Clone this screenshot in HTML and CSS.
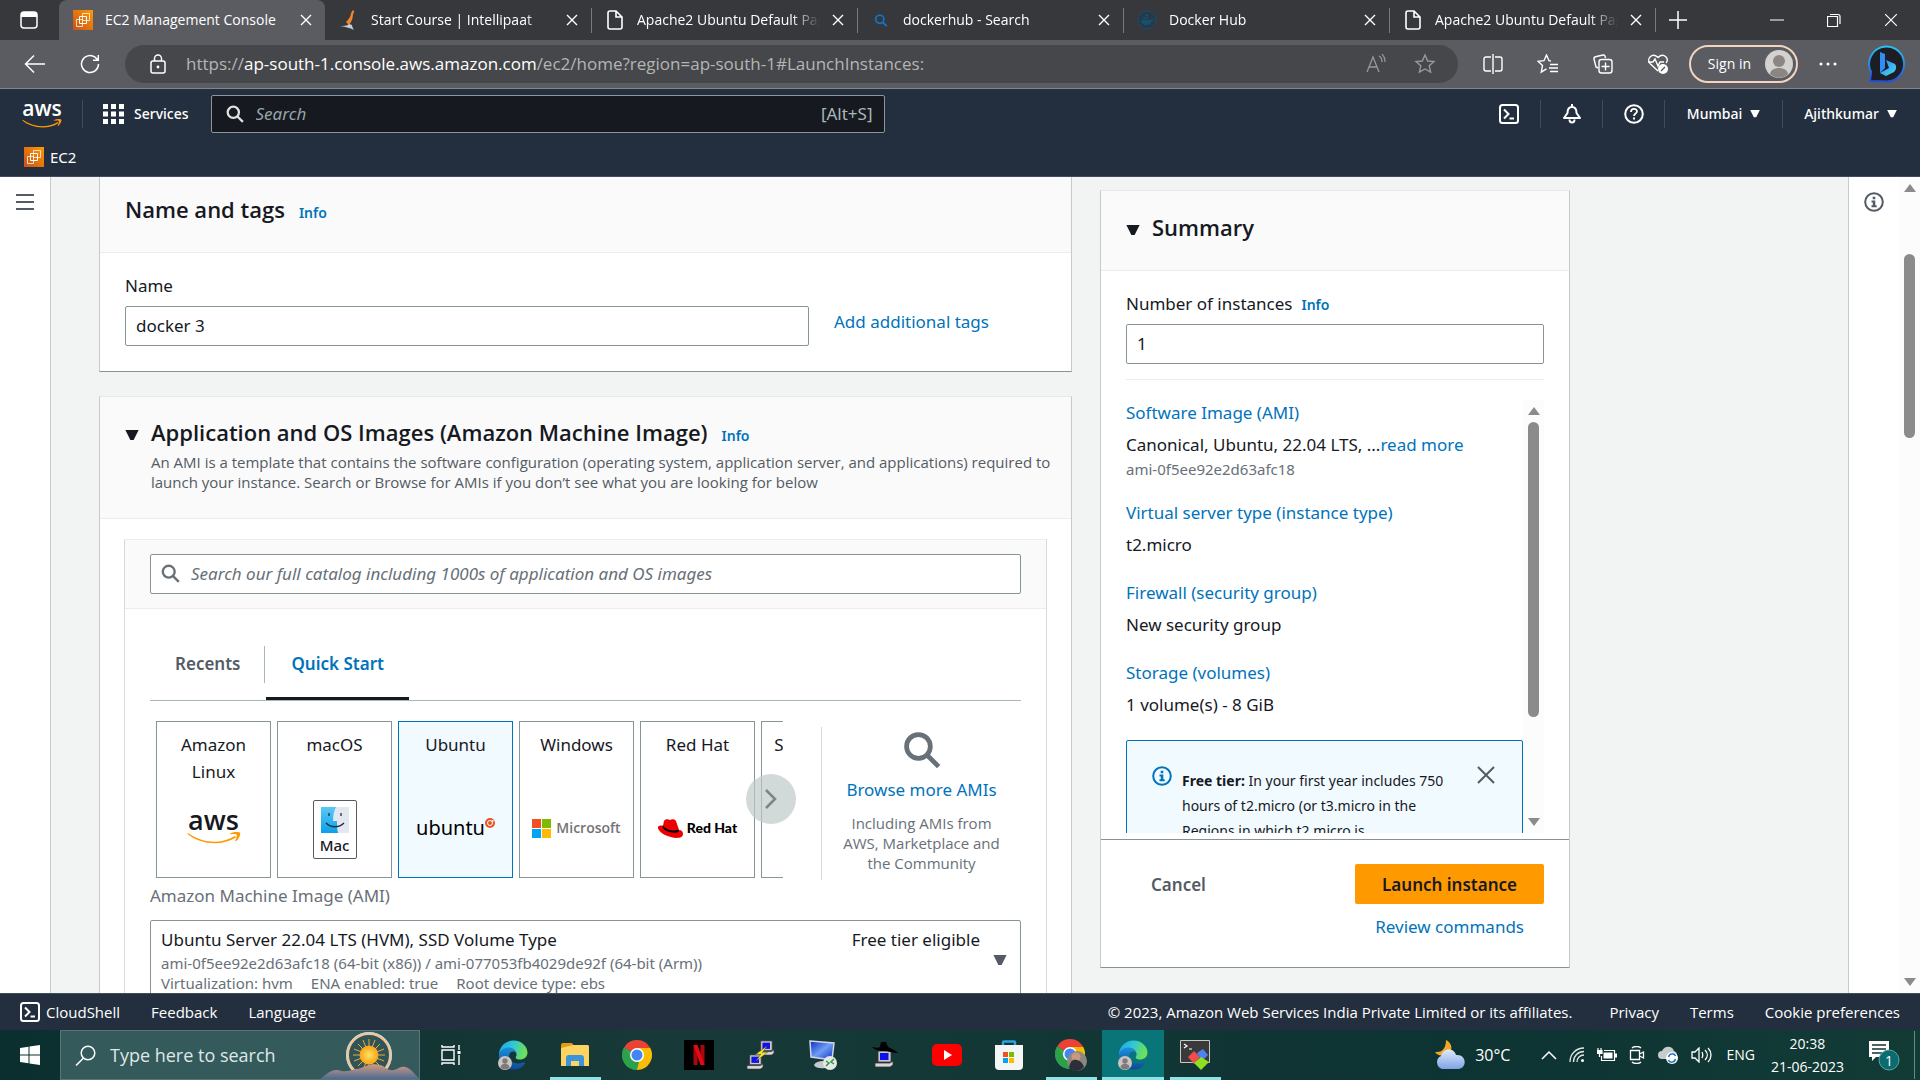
FILE: index.html
```html
<!DOCTYPE html>
<html lang="en">
<head>
<meta charset="utf-8">
<title>EC2 Management Console</title>
<link rel="stylesheet" href="styles.css">
</head>
<body>
<svg class="defs" aria-hidden="true">
  <defs>
    <linearGradient id="ec2g" x1="0" y1="1" x2="1" y2="0"><stop offset="0" stop-color="#c8511b"/><stop offset="1" stop-color="#f90"/></linearGradient>
    <linearGradient id="edgeA" x1="0" y1="0" x2="1" y2="0.3"><stop offset="0" stop-color="#1fa0e6"/><stop offset="0.5" stop-color="#2fc7d8"/><stop offset="1" stop-color="#6be05a"/></linearGradient>
    <linearGradient id="edgeB" x1="0" y1="0" x2="0" y2="1"><stop offset="0" stop-color="#1c8fe0"/><stop offset="1" stop-color="#0c4a93"/></linearGradient>
    <linearGradient id="bingRing" x1="0" y1="0" x2="0" y2="1"><stop offset="0" stop-color="#27c3f3"/><stop offset="1" stop-color="#2450d8"/></linearGradient>
    <linearGradient id="bingB" x1="0" y1="0" x2="1" y2="1"><stop offset="0" stop-color="#3a7bf0"/><stop offset="1" stop-color="#3fe0f0"/></linearGradient>
    <linearGradient id="finder" x1="0" y1="0" x2="0" y2="1"><stop offset="0" stop-color="#5cc8f5"/><stop offset="1" stop-color="#0aa0e8"/></linearGradient>
    <linearGradient id="hill" x1="0" y1="0" x2="0" y2="1"><stop offset="0" stop-color="#d39b83"/><stop offset="1" stop-color="#4c6a92"/></linearGradient>
    <radialGradient id="sun"><stop offset="0" stop-color="#ffe45c"/><stop offset="1" stop-color="#f9a11b"/></radialGradient>
    <linearGradient id="cloudg" x1="0" y1="0" x2="0" y2="1"><stop offset="0" stop-color="#dfeafb"/><stop offset="1" stop-color="#7fa3e6"/></linearGradient>
    <linearGradient id="blueScreen" x1="0" y1="0" x2="1" y2="1"><stop offset="0" stop-color="#0a2cc0"/><stop offset="0.5" stop-color="#6f9df5"/><stop offset="1" stop-color="#0a2cc0"/></linearGradient>
    <symbol id="i-x" viewBox="0 0 12 12"><path d="M1 1l10 10M11 1L1 11" fill="none" stroke="currentColor" stroke-width="1.4"/></symbol>
    <symbol id="i-ec2" viewBox="0 0 20 20"><path fill="url(#ec2g)" d="M0 0h20v20H0z"/><g fill="none" stroke="#fff" stroke-width="1"><path d="M3.500 9.500h6v7h-6zM9.500 3.500h7v7h-7z" opacity=".75"/><path d="M6.500 6.500h7v7h-7z"/></g></symbol>
    <symbol id="i-page" viewBox="0 0 16 20"><path d="M1 3a2 2 0 0 1 2-2h6l6 6v10a2 2 0 0 1-2 2H3a2 2 0 0 1-2-2zM9 1v6h6" fill="none" stroke="#fff" stroke-width="1.600"/></symbol>
    <symbol id="i-search" viewBox="0 0 16 16"><circle cx="6.500" cy="6.500" r="5" fill="none" stroke="currentColor" stroke-width="2"/><path d="M10 10l5 5" stroke="currentColor" stroke-width="2"/></symbol>
    <symbol id="i-shell" viewBox="0 0 20 20"><rect x="1" y="1" width="18" height="18" rx="2.500" fill="none" stroke="#fff" stroke-width="2"/><path d="M5 5.500l4.500 4.500L5 14.500M10.500 14.500H15" fill="none" stroke="#fff" stroke-width="2"/></symbol>
    <symbol id="i-info" viewBox="0 0 20 20"><circle cx="10" cy="10" r="8.800" fill="none" stroke="currentColor" stroke-width="2"/><path d="M8.700 4.800h2.600v2.400H8.700zM7.500 8.500h3.800v4.700h1.400v2H7.500v-2h1.300v-2.700H7.500z" fill="currentColor"/></symbol>
    <symbol id="i-down" viewBox="0 0 12 10"><path d="M0 0h12L7.500 9.200h-3z" fill="currentColor"/></symbol>
    <symbol id="i-edge" viewBox="0 0 30 30"><path d="M1 15C1 6 8 .500 15.500.500 24 .500 29.500 7 29.500 12.500c0 4.500-3.500 7-7.500 7-3.500 0-5-1.500-4-3 1.500-2.500 0-6.500-4.500-6.500C7 10 1 13 1 15z" fill="url(#edgeA)"/><path d="M1 15c.500-5 5-7.500 10-7.500 4 0 7 2.500 7.200 5.500-2-2.500-6.200-2-7 2-1 6 5 10.500 14 7.500 1.500-.400 2 .300 1.500 1.300C24 28 20 29.500 15.500 29.500 7 29.500.500 23 1 15z" fill="url(#edgeB)"/><circle cx="7" cy="23" r="7" fill="#c9c6c4"/><circle cx="7" cy="21" r="2.700" fill="#807b78"/><path d="M2.500 27.500c0-5 9-5 9 0-2.500 2.500-6.500 2.500-9 0z" fill="#807b78"/></symbol>
    <symbol id="i-chrome" viewBox="0 0 30 30"><path d="M15 15L2.010 7.500A15 15 0 0 1 28 7.500z" fill="#ea4335"/><path d="M15 15L28 7.500A15 15 0 0 1 15 30z" fill="#fbbc05"/><path d="M15 15v15A15 15 0 0 1 2.010 7.500z" fill="#34a853"/><path d="M15 8h13.300L21 19 15 30l3-12z" fill="#fbbc05"/><path d="M2.010 7.500L9 19l8 3-2 8A15 15 0 0 1 2.010 7.500z" fill="#2da04a"/><circle cx="15" cy="15" r="7" fill="#fff"/><circle cx="15" cy="15" r="5.500" fill="#4285f4"/></symbol>
    <symbol id="i-pc" viewBox="0 0 20 18"><path d="M4 1h13v11H4z" fill="#c8c8c8" stroke="#333" stroke-width=".8"/><path d="M6 3h8.500v7H6z" fill="#1010e8"/><path d="M1 13h15l3-2v4l-3 2H1z" fill="#d8d8d8" stroke="#333" stroke-width=".8"/></symbol>
    <symbol id="i-swoosh" viewBox="0 0 54 12"><path d="M1 1c14 10 32 12 47 3l1 1.500C34 15 12 12 .500 2z" fill="#f90"/><path d="M43 1.500c4-2 9-2 10-.700s-1 6-4 8.500l-.900-.4c1.500-3 2-5.600 1.400-6.400s-3.500-.600-6.300-.200z" fill="#f90"/></symbol>
  </defs>
</svg>

<header class="browser">
  <div class="tabstrip">
    <button class="icon-btn workspace" aria-label="Tab actions"><svg width="18" height="18" viewBox="0 0 18 18"><rect x="1" y="1" width="16" height="16" rx="3" fill="none" stroke="#fff" stroke-width="1.500"/><path d="M1 4a3 3 0 0 1 3-3h10a3 3 0 0 1 3 3v2H1z" fill="#fff"/></svg></button>
    <div class="tab tab-active"><svg class="fav" width="20" height="20"><use href="#i-ec2"/></svg><span class="tab-title">EC2 Management Console</span><button class="icon-btn" aria-label="Close tab"><svg width="12" height="12"><use href="#i-x"/></svg></button></div>
    <div class="tab no-sep"><svg class="fav" width="20" height="20" viewBox="0 0 20 20"><path d="M14 0c2 1 1 3 0 4 0 4-1 7-4 11L7 12c3-3 5-6 5-9z" fill="#f0862a"/><path d="M1 16c4 0 7 0 9-2l3 1c0 2 1 3 2 5-3-2-8-3-14-4z" fill="#c9cbd8"/></svg><span class="tab-title">Start Course | Intellipaat</span><button class="icon-btn" aria-label="Close tab"><svg width="12" height="12"><use href="#i-x"/></svg></button></div>
    <div class="tab"><svg class="fav" width="20" height="20"><use href="#i-page"/></svg><span class="tab-title">Apache2 Ubuntu Default Page: It works</span><button class="icon-btn" aria-label="Close tab"><svg width="12" height="12"><use href="#i-x"/></svg></button></div>
    <div class="tab"><svg class="fav bing-search" width="20" height="13"><use href="#i-search"/></svg><span class="tab-title">dockerhub - Search</span><button class="icon-btn" aria-label="Close tab"><svg width="12" height="12"><use href="#i-x"/></svg></button></div>
    <div class="tab"><svg class="fav" width="20" height="20" viewBox="0 0 20 20"><circle cx="10" cy="10" r="9" fill="#243a4a" stroke="#1f4a68"/><path d="M4 10h10c1 0 2-1 2-2 1 1 1 2-1 3-1 3-3 4-6 4s-5-2-5-5zM6 7h2v2H6zM9 7h2v2H9zM9 4h2v2H9z" fill="#15506f"/></svg><span class="tab-title">Docker Hub</span><button class="icon-btn" aria-label="Close tab"><svg width="12" height="12"><use href="#i-x"/></svg></button></div>
    <div class="tab"><svg class="fav" width="20" height="20"><use href="#i-page"/></svg><span class="tab-title">Apache2 Ubuntu Default Page: It works</span><button class="icon-btn" aria-label="Close tab"><svg width="12" height="12"><use href="#i-x"/></svg></button></div>
    <button class="icon-btn new-tab" aria-label="New tab"><svg width="18" height="18" viewBox="0 0 18 18"><path d="M9 0v18M0 9h18" stroke="#fff" stroke-width="1.500"/></svg></button>
    <div class="window-buttons">
      <button class="icon-btn" aria-label="Minimize"><svg width="14" height="14" viewBox="0 0 14 14"><path d="M0 7h14" stroke="#fff"/></svg></button>
      <button class="icon-btn" aria-label="Restore"><svg width="14" height="14" viewBox="0 0 14 14"><path d="M.500 3.500h10v10H.500zM3 1.500h8a2 2 0 0 1 2 2V11" fill="none" stroke="#fff" stroke-width="1.200"/></svg></button>
      <button class="icon-btn" aria-label="Close"><svg width="14" height="14" viewBox="0 0 12 12"><path d="M1 1l10 10M11 1L1 11" stroke="#fff"/></svg></button>
    </div>
  </div>
  <div class="toolbar">
    <button class="icon-btn" aria-label="Back"><svg width="22" height="20" viewBox="0 0 22 20"><path d="M21 10H2M10 1.500L1.500 10l8.500 8.500" fill="none" stroke="#fff" stroke-width="1.500"/></svg></button>
    <button class="icon-btn" aria-label="Refresh"><svg width="20" height="20" viewBox="0 0 20 20"><path d="M18.500 10A8.500 8.500 0 1 1 15 3.200L18 6M18.300 1v5.300H13" fill="none" stroke="#fff" stroke-width="1.500"/></svg></button>
    <div class="address">
      <svg width="16" height="20" viewBox="0 0 16 20"><rect x="1" y="7" width="14" height="12" rx="2" fill="none" stroke="#fff" stroke-width="1.500"/><path d="M4.500 7V4.500a3.500 3.500 0 0 1 7 0V7" fill="none" stroke="#fff" stroke-width="1.500"/><circle cx="8" cy="13" r="1.400" fill="#fff"/></svg>
      <a class="url" href="#"><span>https://</span>ap-south-1.console.aws.amazon.com<span>/ec2/home?region=ap-south-1#LaunchInstances:</span></a>
      <svg class="dim" width="20" height="20" viewBox="0 0 20 20"><path d="M1 18L7 3l6 15M3 13h8M13 2c2 1 3 3 3 6M16 0c2 2 3 4 3 8" fill="none" stroke="currentColor" stroke-width="1.300"/></svg>
      <svg class="dim" width="22" height="22" viewBox="0 0 22 22"><path d="M11 2l2.700 6 6.300.600-4.800 4.200 1.400 6.400L11 16l-5.600 3.200 1.400-6.400L2 8.600 8.300 8z" fill="none" stroke="currentColor" stroke-width="1.400"/></svg>
    </div>
    <div class="tool-icons">
      <svg width="20" height="20" viewBox="0 0 20 20"><path d="M8 3H3a2 2 0 0 0-2 2v10a2 2 0 0 0 2 2h5M12 3h5a2 2 0 0 1 2 2v10a2 2 0 0 1-2 2h-5M10 0v20" fill="none" stroke="#fff" stroke-width="1.400"/></svg>
      <svg width="22" height="20" viewBox="0 0 22 20"><path d="M14 7l-2-.300L9.500 1 7 6.700 1 7.300l4.500 4.200L4.300 18l5.200-3.200M13 10.500h8M12 14h9M13 17.500h8" fill="none" stroke="#fff" stroke-width="1.400"/></svg>
      <svg width="20" height="20" viewBox="0 0 20 20"><path d="M5 14l-2-1L1 5a2 2 0 0 1 1.500-2.300L10 1a2 2 0 0 1 2 1l.500 2" fill="none" stroke="#fff" stroke-width="1.400"/><rect x="6" y="5.500" width="13" height="13.500" rx="2.500" fill="none" stroke="#fff" stroke-width="1.400"/><path d="M12.500 8.500v8M8.500 12.500h8" stroke="#fff" stroke-width="1.400"/></svg>
      <svg width="22" height="20" viewBox="0 0 22 20"><path d="M11 17L3 9.500C-1 5 5-2 11 3.500 17-2 23 5 19 9M1 8h5l2-3 3 7 2-4h4" fill="none" stroke="#fff" stroke-width="1.400"/><circle cx="16" cy="15" r="5" fill="#fff"/><path d="M14 17l4-4" stroke="#5b5c61" stroke-width="1.500"/></svg>
    </div>
    <button class="signin">Sign in <svg width="28" height="28" viewBox="0 0 28 28"><circle cx="14" cy="14" r="14" fill="#d4d2cf"/><circle cx="14" cy="11" r="6" fill="#8b8683"/><path d="M5 24c1-8 17-8 18 0-5 5-13 5-18 0z" fill="#8b8683"/></svg></button>
    <button class="icon-btn" aria-label="Settings and more"><svg width="18" height="4" viewBox="0 0 18 4"><g fill="#fff"><circle cx="2" cy="2" r="1.500"/><circle cx="9" cy="2" r="1.500"/><circle cx="16" cy="2" r="1.500"/></g></svg></button>
    <button class="icon-btn bing" aria-label="Bing"><svg width="38" height="38" viewBox="0 0 38 38"><path d="M2 36l1-9A17.500 17.500 0 1 1 19 36.500z" fill="#1d1d26" stroke="url(#bingRing)" stroke-width="2"/><path d="M12 7l5 2v14l-5 5z" fill="#2f8df5"/><path d="M18 15l9 4c2 3 1 6-1 8l-8 4-6-3 9-5z" fill="url(#bingB)"/></svg></button>
  </div>
</header>

<nav class="aws-nav">
  <div class="nav-row">
    <a class="aws-logo" href="#" aria-label="AWS home"><span>aws</span><svg width="40" height="9"><use href="#i-swoosh"/></svg></a>
    <i class="sep"></i>
    <button class="services"><svg width="21" height="20" viewBox="0 0 21 20"><path d="M0 0h5v5H0zM8 0h5v5H8zM16 0h5v5h-5zM0 7.500h5v5H0zM8 7.500h5v5H8zM16 7.500h5v5h-5zM0 15h5v5H0zM8 15h5v5H8zM16 15h5v5h-5z" fill="#fff"/></svg>Services</button>
    <div class="nav-search"><svg width="18" height="18"><use href="#i-search"/></svg><input type="text" placeholder="Search" aria-label="Search AWS"><span>[Alt+S]</span></div>
    <div class="nav-right">
      <button aria-label="CloudShell"><svg width="20" height="20"><use href="#i-shell"/></svg></button>
      <button aria-label="Notifications"><svg width="20" height="20" viewBox="0 0 20 20"><path d="M10 0v3M10 3c4 0 4.500 4 4.500 6L18 14H2l3.500-5C5.500 7 6 3 10 3z" fill="none" stroke="#fff" stroke-width="2" stroke-linejoin="round"/><path d="M7.500 15.500a2.500 3 0 0 0 5 0" fill="none" stroke="#fff" stroke-width="2"/></svg></button>
      <button aria-label="Help"><svg width="20" height="20" viewBox="0 0 20 20"><circle cx="10" cy="10" r="8.800" fill="none" stroke="#fff" stroke-width="2"/><path d="M7 8c0-4 6-4 6-.500 0 2-3 2-3 4.500" fill="none" stroke="#fff" stroke-width="1.800"/><path d="M9 13.500h2v2H9z" fill="#fff"/></svg></button>
      <button class="region">Mumbai <svg width="10" height="8"><use href="#i-down"/></svg></button>
      <button class="account">Ajithkumar <svg width="10" height="8"><use href="#i-down"/></svg></button>
    </div>
  </div>
  <div class="nav-fav"><a href="#"><svg width="20" height="20"><use href="#i-ec2"/></svg>EC2</a></div>
</nav>

<main class="console">
  <aside class="side-left"><button aria-label="Open navigation"><svg width="18" height="16" viewBox="0 0 18 16"><path d="M0 1h18M0 8h18M0 15h18" stroke="#545b64" stroke-width="2"/></svg></button></aside>
  <div class="content">
    <div class="column">
      <section class="card card-name">
        <header class="card-head"><h2>Name and tags</h2><a class="info" href="#">Info</a></header>
        <div class="name-body">
          <label for="iname">Name</label>
          <div class="name-row"><input id="iname" class="field" type="text" value="docker 3"><a href="#">Add additional tags</a></div>
        </div>
      </section>
      <section class="card card-ami">
        <header class="card-head ami-head">
          <svg class="caret" width="14" height="11"><use href="#i-down"/></svg>
          <div><div class="title-line"><h2>Application and OS Images (Amazon Machine Image)</h2><a class="info" href="#">Info</a></div>
          <p>An AMI is a template that contains the software configuration (operating system, application server, and applications) required to launch your instance. Search or Browse for AMIs if you don’t see what you are looking for below</p></div>
        </header>
        <div class="inner">
          <div class="inner-head"><div class="field catalog"><svg width="19" height="19"><use href="#i-search"/></svg><input type="text" aria-label="Search AMIs" placeholder="Search our full catalog including 1000s of application and OS images"></div></div>
          <div class="inner-body">
            <div class="os-tabs"><button>Recents</button><button class="on">Quick Start</button></div>
            <div class="picker">
              <div class="carousel">
                <div class="tiles">
                  <button class="tile">Amazon Linux<span class="logo aws-dark"><span>aws</span><svg width="54" height="12"><use href="#i-swoosh"/></svg></span></button>
                  <button class="tile">macOS<span class="logo mac"><svg width="28" height="26" viewBox="0 0 28 26"><path fill="#e3e8f0" d="M0 0h28v26H0z"/><path d="M0 0h15c-2 4-3 8-3 14h4c0 5 0 8 1 12H0z" fill="url(#finder)"/><path d="M8 6v3M20 6v3M5 16c5 5 13 5 18 0" fill="none" stroke="#1c2b45" stroke-width="1.300"/></svg>Mac</span></button>
                  <button class="tile on">Ubuntu<span class="logo ubuntu">ubuntu<svg width="10" height="10" viewBox="0 0 10 10"><circle cx="5" cy="5" r="5" fill="#e95420"/><circle cx="5" cy="5" r="2.500" fill="none" stroke="#fff"/><circle cx="7.600" cy="3" r="1" fill="#fff"/></svg></span></button>
                  <button class="tile">Windows<span class="logo ms"><svg width="19" height="19" viewBox="0 0 19 19"><path fill="#f25022" d="M0 0h9v9H0z"/><path fill="#7fba00" d="M10 0h9v9h-9z"/><path fill="#00a4ef" d="M0 10h9v9H0z"/><path fill="#ffb900" d="M10 10h9v9h-9z"/></svg>Microsoft</span></button>
                  <button class="tile">Red Hat<span class="logo redhat"><svg width="25" height="19" viewBox="0 0 25 19"><path d="M6 2c1-2 4-2 6-1 2-1 5-1 6 1l3 9c3 0 4 2 4 4 0 6-12 4-18 1S-2 8 1 7c1-.500 3-.500 4-.300z" fill="#e00"/><path d="M5 6.500C8 11 16 13 20.500 10.500l.5 2C16 15.500 7 12.500 4.500 8.500z" fill="#000"/></svg>Red Hat</span></button>
                  <button class="tile">SUSE Linux</button>
                </div>
                <button class="next" aria-label="Next"><svg width="12" height="20" viewBox="0 0 12 20"><path d="M1 1l9 9-9 9" fill="none" stroke="#7d8585" stroke-width="2.500"/></svg></button>
              </div>
              <div class="browse"><svg width="38" height="38"><use href="#i-search"/></svg><a href="#">Browse more AMIs</a><p>Including AMIs from AWS, Marketplace and the Community</p></div>
            </div>
            <span class="ami-label" id="amil">Amazon Machine Image (AMI)</span>
            <button class="ami-select" aria-haspopup="listbox" aria-labelledby="amil">
              <span class="ami-text"><span class="ami-name"><span>Ubuntu Server 22.04 LTS (HVM), SSD Volume Type</span><span>Free tier eligible</span></span>
              <small>ami-0f5ee92e2d63afc18 (64-bit (x86)) / ami-077053fb4029de92f (64-bit (Arm))</small>
              <small class="facts"><span>Virtualization: hvm</span><span>ENA enabled: true</span><span>Root device type: ebs</span></small></span>
              <svg width="14" height="11"><use href="#i-down"/></svg>
            </button>
          </div>
        </div>
      </section>
    </div>
    <section class="card summary">
      <header class="card-head sum-head"><svg class="caret" width="14" height="11"><use href="#i-down"/></svg><h2>Summary</h2></header>
      <div class="sum-body">
        <div class="count-label"><label for="count">Number of instances</label><a class="info" href="#">Info</a></div>
        <input id="count" class="field" type="text" inputmode="numeric" value="1">
        <hr>
        <div class="sum-scroll">
          <div class="sum-list">
            <dl>
              <dt><a href="#">Software Image (AMI)</a></dt><dd>Canonical, Ubuntu, 22.04 LTS, ...<a href="#">read more</a><small>ami-0f5ee92e2d63afc18</small></dd>
              <dt><a href="#">Virtual server type (instance type)</a></dt><dd>t2.micro</dd>
              <dt><a href="#">Firewall (security group)</a></dt><dd>New security group</dd>
              <dt><a href="#">Storage (volumes)</a></dt><dd>1 volume(s) - 8 GiB</dd>
            </dl>
            <div class="tier"><svg width="20" height="20"><use href="#i-info"/></svg><p><b>Free tier:</b> In your first year includes 750 hours of t2.micro (or t3.micro in the Regions in which t2.micro is</p><button aria-label="Dismiss"><svg width="18" height="18" viewBox="0 0 18 18"><path d="M1 1l16 16M17 1L1 17" stroke="#545b64" stroke-width="2"/></svg></button></div>
          </div>
          <div class="bar"><svg width="12" height="8" viewBox="0 0 12 8"><path d="M6 0l6 8H0z" fill="#8b8b8b"/></svg><i class="thumb"></i><svg width="12" height="8" viewBox="0 0 12 8"><path d="M6 8L0 0h12z" fill="#8b8b8b"/></svg></div>
        </div>
      </div>
      <footer class="sum-foot">
        <div><button class="cancel">Cancel</button><button class="launch">Launch instance</button></div>
        <a href="#">Review commands</a>
      </footer>
    </section>
  </div>
  <aside class="side-right"><button aria-label="Info panel"><svg width="20" height="20"><use href="#i-info"/></svg></button>
    <div class="bar page-bar"><svg width="12" height="8" viewBox="0 0 12 8"><path d="M6 0l6 8H0z" fill="#8b8b8b"/></svg><i class="thumb"></i><svg width="12" height="8" viewBox="0 0 12 8"><path d="M6 8L0 0h12z" fill="#8b8b8b"/></svg></div>
  </aside>
</main>

<footer class="aws-foot">
  <a href="#" class="shell"><svg width="20" height="20"><use href="#i-shell"/></svg>CloudShell</a><a href="#">Feedback</a><a href="#">Language</a>
  <span class="copy">© 2023, Amazon Web Services India Private Limited or its affiliates.</span><a href="#">Privacy</a><a href="#">Terms</a><a href="#">Cookie preferences</a>
</footer>

<div class="taskbar">
  <button class="start" aria-label="Start"><svg width="20" height="20" viewBox="0 0 20 20"><path d="M0 3l8.500-1.200v7.700H0zM9.500 1.600L20 0v9.500H9.500zM0 10.500h8.500v7.700L0 17zM9.500 10.500H20V20L9.500 18.400z" fill="#fff"/></svg></button>
  <div class="win-search">
    <svg width="21" height="21" viewBox="0 0 21 21"><circle cx="13" cy="8" r="6.800" fill="none" stroke="#fff" stroke-width="1.500"/><path d="M8.500 13L1 20.500" stroke="#fff" stroke-width="1.500"/></svg>
    <input type="text" placeholder="Type here to search" aria-label="Type here to search">
    <svg class="scene" width="100" height="48" viewBox="0 0 100 48"><circle cx="49" cy="24" r="21.500" fill="#2f5356" stroke="#f3c58b" stroke-width="3"/><circle cx="49" cy="24" r="22.500" fill="none" stroke="#b9d7f3"/><g stroke="#e8ae3c" stroke-width="1"><path d="M49 8v32M33 24h32M38 13l22 22M60 13L38 35M43 9l12 30M55 9L43 39M34 18l30 12M34 30l30-12"/></g><circle cx="49" cy="24" r="9.500" fill="url(#sun)"/><path d="M0 48c6-4 10-10 18-9 8 3 12 0 18-1 8-1 14-7 24-4 6 1 6 6 14 5 6-2 8-5 14-2 5 3 8 8 12 11z" fill="url(#hill)"/></svg>
  </div>
  <div class="apps">
    <button aria-label="Task view"><svg width="20" height="20" viewBox="0 0 20 20"><path d="M1 5h12v10H1zM1 0v2h12V0M1 20v-2h12v2M18 0v5M18 10v10" fill="none" stroke="#fff" stroke-width="1.400"/><path d="M16.500 6h3v3h-3z" fill="#fff"/></svg></button>
    <button aria-label="Edge"><svg width="30" height="30"><use href="#i-edge"/></svg></button>
    <button class="run" aria-label="File Explorer"><svg width="28" height="24" viewBox="0 0 28 24"><path d="M0 2a2 2 0 0 1 2-2h9l2 3v3H0z" fill="#e39c12"/><path d="M0 5l12-3h15l1 1v20H0z" fill="#fcd462"/><path d="M5 23v-8a3 3 0 0 1 3-3h12a3 3 0 0 1 3 3v8h-5v-5h-8v5z" fill="#3a93dc"/></svg></button>
    <button aria-label="Chrome"><svg width="30" height="30"><use href="#i-chrome"/></svg></button>
    <button aria-label="Netflix"><svg width="30" height="30" viewBox="0 0 30 30"><path d="M0 0h30v30H0z"/><path d="M9.500 5h4v20h-4zM16.500 5h4v20h-4z" fill="#a8070f"/><path d="M9.500 5h4l7 20h-4z" fill="#e50914"/></svg></button>
    <button aria-label="PuTTY"><svg width="30" height="30" viewBox="0 0 30 30"><use href="#i-pc" x="11" y="0" width="18" height="16"/><use href="#i-pc" x="0" y="14" width="18" height="16"/><path d="M21 6L9 15l6-1-5 7 12-9-6 1z" fill="#ffef1a" stroke="#555" stroke-width=".5"/></svg></button>
    <button aria-label="Remote Desktop"><svg width="30" height="30" viewBox="0 0 30 30"><path d="M2 1l24 2-2 17-21-3z" fill="url(#blueScreen)" stroke="#cfd6e6" stroke-width="1.500"/><path d="M6 25c2-5 16-5 18-1-2 5-16 6-18 1z" fill="#c5c9cf"/><circle cx="22" cy="23" r="7" fill="#e6e8e6"/><path d="M18 21l3 2-3 3M26 19l-3 3 3 2" fill="none" stroke="#2a9a3f" stroke-width="1.500"/></svg></button>
    <button aria-label="Pageant"><svg width="26" height="28" viewBox="0 0 26 28"><use href="#i-pc" x="1" y="9" width="22" height="18"/><path d="M0 6c4 1 6 1 8 0l1-5c2 1 3-1 5 0l2 5c4 2 7 3 10 6-6 0-10-2-14-2S4 10 0 6z"/></svg></button>
    <button aria-label="YouTube"><svg width="30" height="24" viewBox="0 0 30 22"><rect width="30" height="22" rx="5" fill="#f00"/><path d="M12 6l8 5-8 5z" fill="#fff"/></svg></button>
    <button aria-label="Microsoft Store"><svg width="30" height="30" viewBox="0 0 30 30"><path d="M9 6V2.500A1 1 0 0 1 10 1.500h10a1 1 0 0 1 1 1V6" fill="none" stroke="#2ba3e0" stroke-width="2.500"/><path d="M1 5h28v21a4 4 0 0 1-4 4H5a4 4 0 0 1-4-4z" fill="#f4f5f5"/><path fill="#f25022" d="M9 12h5v5H9z"/><path fill="#7fba00" d="M15 12h5v5h-5z"/><path fill="#00a4ef" d="M9 18h5v5H9z"/><path fill="#ffb900" d="M15 18h5v5h-5z"/></svg></button>
    <button class="run" aria-label="Chrome profile"><svg width="32" height="32" viewBox="0 0 32 32"><use href="#i-chrome" width="30" height="30"/><circle cx="22" cy="22" r="10" fill="#8d8780"/><circle cx="21" cy="18" r="4.500" fill="#c79a80"/><path d="M14 29c1-7 4-9 8-8s6 4 7 7c-4 5-11 5-15 1z" fill="#2b2f3c"/></svg></button>
    <button class="run active" aria-label="Edge window"><svg width="30" height="30"><use href="#i-edge"/></svg></button>
    <button class="run" aria-label="MobaXterm"><svg width="30" height="30" viewBox="0 0 30 30"><path d="M.500.500h29v22H.500z" fill="#3a3a3a" stroke="#c8c8c8"/><path d="M4 4l3 2-3 2M9 9h3" fill="none" stroke="#fff" stroke-width="1.200"/><path d="M8 17l6-6 6 6-6 7z" fill="#ee4d4d"/><path d="M17 13l6-4 5 6-6 6z" fill="#4d83f0"/><path d="M14 23l7-6 8 5-8 8z" fill="#8ee020"/></svg></button>
  </div>
  <div class="tray">
    <button class="weather"><svg width="30" height="30" viewBox="0 0 30 30"><path d="M11 0c8 4 7 14-2 15-4 1-7 0-9-3 8 1 11-5 11-12z" fill="#f5a623"/><path d="M7 29a7 7 0 0 1-1-13c1-8 13-9 15-1 11-1 11 13 3 14z" fill="url(#cloudg)"/></svg>30°C</button>
    <div class="tray-icons">
      <svg width="16" height="10" viewBox="0 0 16 10"><path d="M1 9l7-7 7 7" fill="none" stroke="#fff" stroke-width="1.500"/></svg>
      <svg width="16" height="16" viewBox="0 0 16 16"><path d="M1 15C1 7 7 1 15 1M4.500 15C4.500 9 9 4.500 15 4.500M8 15c0-4 3-7 7-7" fill="none" stroke="#dfe6e6" stroke-width="1.300"/><circle cx="13.500" cy="13.500" r="1.500" fill="#fff"/></svg>
      <svg width="20" height="14" viewBox="0 0 20 14"><path d="M7 2.500h10.500v10H4.500V8" fill="none" stroke="#fff" stroke-width="1.200"/><path d="M6.500 4.500h9v6h-9zM18 5.500h2v4h-2z" fill="#fff"/><path d="M0 2.500h5v3H0zM1 0v3M4 0v3M2.500 5v4" fill="#fff" stroke="#fff" stroke-width="1.200"/></svg>
      <svg width="16" height="18" viewBox="0 0 16 18"><path d="M1.500 4.500h9v9h-9zM10.500 8l4-2v6l-4-2M3 2c2-2 7-2 9 0M3 16c2 2 7 2 9 0" fill="none" stroke="#fff" stroke-width="1.300"/></svg>
      <svg width="22" height="18" viewBox="0 0 22 18"><path d="M5 13a4 4 0 0 1 0-8c2-5 10-6 12 0 4 1 4 8 0 8z" fill="#c5cccc"/><circle cx="15" cy="12" r="6" fill="#fff"/><path d="M11.500 11c1-4 6-4 7-1M18.500 13c-1 4-6 4-7 1" fill="none" stroke="#1b6fc2" stroke-width="1.500"/></svg>
      <svg width="22" height="16" viewBox="0 0 22 16"><path d="M1 5h3l4-4v14l-4-4H1zM11 5c1 2 1 4 0 6M14 3c3 3 3 7 0 10M17 1c4 4 4 10 0 14" fill="none" stroke="#fff" stroke-width="1.300"/></svg>
    </div>
    <span class="lang">ENG</span>
    <div class="clock"><span>20:38</span><span>21-06-2023</span></div>
    <button class="notify" aria-label="Notifications"><svg width="32" height="32" viewBox="0 0 32 32"><path d="M1 2h20v16H8l-4 4v-4H1z" fill="#fff"/><path d="M4 6h14M4 10h14M4 14h10" stroke="#0f3434" stroke-width="1.300"/><circle cx="21" cy="21" r="10" fill="#0a6c6f" stroke="#5aa3a3"/></svg><b>1</b></button>
  </div>
</div>
</body>
</html>
```
FILE: styles.css
```css
* { box-sizing: border-box; }
:root {
  --ui: "Open Sans", "Noto Sans", sans-serif;
  --ember: "Noto Sans", "Open Sans", sans-serif;
  --link: #0073bb;
  --ink: #16191f;
  --muted: #687078;
}
body {
  margin: 0;
  height: 100vh;
  display: flex;
  flex-direction: column;
  overflow: hidden;
  font: 16px/20px var(--ember);
  color: var(--ink);
}
button, input { font: inherit; color: inherit; border: 0; background: none; padding: 0; margin: 0; }
input { outline: 0; min-width: 0; }
a { color: var(--link); text-decoration: none; }
svg { display: block; flex: none; }
h2, p, dl, dd { margin: 0; }
.defs { position: absolute; width: 0; height: 0; }
.icon-btn { display: flex; align-items: center; justify-content: center; flex: none; }

/* browser chrome */
.browser { font: 14px/20px var(--ui); color: #fff; flex: none; }
.tabstrip { display: flex; height: 40px; background: #37383c; align-items: stretch; }
.workspace { width: 59px; padding-right: 1px; }
.tab { flex: 0 1 266px; min-width: 0; display: flex; align-items: center; padding: 8px 13px 8px 14px; gap: 12px; position: relative; }
.tab:not(.tab-active):not(.no-sep)::before { content: ""; position: absolute; left: 0; top: 8px; width: 1px; height: 25px; background: #77787c; }
.tab-active { background: #5b5c61; border-radius: 8px 8px 0 0; }
.tab-title { flex: 1; white-space: nowrap; overflow: hidden; -webkit-mask-image: linear-gradient(to right, #000 84%, transparent); mask-image: linear-gradient(to right, #000 84%, transparent); }
.tab-active .tab-title { -webkit-mask-image: none; mask-image: none; }
.bing-search { color: #0f78d4; }
.new-tab { width: 44px; border-left: 1px solid #77787c; margin: 8px 0; }
.window-buttons { display: flex; margin-left: auto; gap: 43px; padding-right: 22px; }
.toolbar { display: flex; align-items: center; height: 49px; background: #5b5c61; border-bottom: 1px solid #85868a; padding: 0 14px 0 24px; }
.toolbar > .icon-btn + .icon-btn { margin-left: 34px; }
.address { flex: 1; display: flex; align-items: center; height: 38px; margin-left: 25px; padding: 0 22px 0 25px; border-radius: 19px; background: #46474a; gap: 28px; }
.url { flex: 1; margin-left: -8px; font-size: 17px; line-height: 26px; color: #fff; white-space: nowrap; }
.url span { color: #b4b5b7; }
.dim { color: #98999b; }
.tool-icons { display: flex; align-items: center; gap: 34px; padding: 0 20px 0 25px; }
.signin { display: flex; align-items: center; gap: 14px; height: 38px; padding: 0 3px 0 17px; font-size: 14px; border: 2px solid #f3d5bf; border-radius: 19px; white-space: nowrap; }
.toolbar > .signin + .icon-btn { margin-left: 21px; }
.toolbar > .icon-btn.bing { margin-left: 31px; }

/* AWS navigation */
.aws-nav { flex: none; background: #232f3e; color: #fff; height: 88px; border-bottom: 1px solid #414d5c; font-size: 15px; }
.nav-row { display: flex; align-items: center; height: 50px; padding: 0 0 0 22px; }
.aws-logo { color: #fff; display: flex; flex-direction: column; width: 40px; font: 600 21px/15px var(--ui); text-align: center; gap: 3px; }
.sep { width: 1px; height: 28px; background: #3f4b5a; margin: 0 20px 0 20px; }
.services { display: flex; align-items: center; gap: 10px; font-weight: 500; font-size: 14px; }
.nav-search { display: flex; align-items: center; width: 674px; height: 38px; margin-left: 22px; padding: 0 11px 0 14px; border: 1px solid #8d9699; border-radius: 2px; background: #16191f; gap: 12px; font-size: 17px; color: #dfe3e3; }
.nav-search input { flex: 1; font-style: italic; }
.nav-search input::placeholder { color: #95a5a6; opacity: 1; }
.nav-search span { color: #aab7b8; }
.nav-right { display: flex; margin-left: auto; font-size: 14px; }
.nav-right button { display: flex; align-items: center; justify-content: center; gap: 8px; height: 28px; width: 62px; border-left: 1px solid #3f4b5a; font-weight: 500; }
.nav-right button:first-child { border: 0; }
.nav-right button.region { width: 118px; }
.nav-right button.account { width: 138px; padding-right: 2px; }
.nav-fav { display: flex; padding: 8px 24px 0; }
.nav-fav a { display: flex; align-items: center; gap: 6px; color: #fff; }

/* console */
.console { flex: 1; min-height: 0; display: flex; background: #f2f3f3; overflow: hidden; font-size: 17px; line-height: 25px; }
.side-left { flex: none; width: 51px; background: #fff; border-right: 1px solid #c5cbcc; padding: 14px 16px; }
.side-right { flex: none; display: flex; justify-content: space-between; width: 72px; background: #fff; border-left: 1px solid #c5cbcc; color: #545b64; }
.side-right > button { align-self: flex-start; margin: 15px 0 0 15px; }
.bar { display: flex; flex-direction: column; align-items: center; width: 21px; background: #fcfcfc; padding: 7px 0; }
.thumb { width: 11px; border-radius: 6px; background: #8b8b8b; }
.content { flex: 1; min-width: 0; display: flex; align-items: flex-start; gap: 28px; padding: 0 278px 0 48px; }
.column { flex: 1; min-width: 0; }
.card { background: #fff; border: 1px solid; border-color: #e6e9e9 #c5cbcc #879196; }
.card-head { display: flex; align-items: baseline; background: #fafafa; border-bottom: 1px solid #eaeded; gap: 14px; }
h2 { font: 600 22px/28px var(--ui); }
.info { font-size: 14px; font-weight: 600; }
.caret { color: var(--ink); }
.card-name { border-top: 0; margin-bottom: 24px; }
.card-name .card-head { padding: 18px 25px 28px; height: 76px; }
.name-body { padding: 20px 25px 25px; }
.name-body label { display: block; margin-bottom: 8px; }
.name-row { display: flex; align-items: center; gap: 25px; }
.name-row .field { flex: 1; max-width: 684px; }
.name-row a { padding-bottom: 10px; }
.field { height: 40px; border: 1px solid #879596; border-radius: 2px; background: #fff; padding: 0 10px 2px; }
.card-ami { border-bottom: 0; }
.ami-head { height: 122px; padding: 21px 16px 0 25px; gap: 12px; }
.title-line { display: flex; align-items: baseline; gap: 14px; }
.ami-head p { font: 15px/20px var(--ui); color: #545b64; margin-top: 4px; }
.inner { margin: 20px 24px 0; border: 1px solid #d5dbdb; border-bottom: 0; border-top-color: #eaeded; }
.inner-head { padding: 14px 25px; background: #fafafa; border-bottom: 1px solid #eaeded; }
.catalog { display: flex; align-items: center; gap: 11px; color: var(--muted); }
.catalog input { flex: 1; font-style: italic; }
.catalog input::placeholder { color: var(--muted); opacity: 1; }
.inner-body { padding: 37px 25px 0; }
.os-tabs { display: flex; border-bottom: 1px solid #aab7b8; height: 55px; }
.os-tabs button { position: relative; padding: 0 25px 20px; color: #545b64; font-weight: 600; }
.os-tabs button:first-child::after { content: ""; position: absolute; right: 0; top: 0; height: 37px; width: 1px; background: #aab7b8; }
.os-tabs .on { color: var(--link); border-bottom: 3px solid var(--ink); margin-left: 1px; padding-bottom: 17px; }
.picker { display: flex; justify-content: space-between; padding-top: 20px; height: 179px; }
.carousel { position: relative; flex: 0 1 633px; min-width: 0; padding-left: 6px; }
.tiles { display: flex; gap: 6px; overflow: hidden; }
.tile { flex: none; display: flex; flex-direction: column; align-items: center; justify-content: space-between; width: 115px; height: 157px; padding: 9px 12px 0; border: 1px solid #879596; line-height: 27px; }
.tile.on { border-color: var(--link); background: #f1faff; }
.logo { height: 98px; display: flex; align-items: center; justify-content: center; white-space: nowrap; flex: none; }
.aws-dark { flex-direction: column; gap: 3px; padding-bottom: 14px; font: 600 27px/18px var(--ui); }
.mac { flex-direction: column; width: 44px; height: 59px; border: 1px solid #545b64; border-radius: 2px; font: 500 15px/20px var(--ember); background: #fff; margin-bottom: 18px; padding-top: 2px; gap: 2px; }
.ubuntu { font: 20px/24px "Noto Sans", sans-serif; color: #000; }
.ubuntu svg { margin-bottom: 10px; }
.ms { gap: 5px; color: #737373; font: 600 14px/20px var(--ui); }
.redhat { gap: 4px; color: #000; font: 900 14px/20px "Lato", sans-serif; }
.next { position: absolute; right: -13px; top: 53px; width: 50px; height: 50px; border-radius: 50%; background: rgba(190, 202, 200, .7); display: flex; align-items: center; justify-content: center; }
.browse { width: 200px; margin-top: 6px; border-left: 1px solid #d5dbdb; display: flex; flex-direction: column; align-items: center; text-align: center; color: var(--muted); padding: 4px 0 0 0; }
.browse a { margin: 8px 0 10px; }
.browse p { width: 160px; font: 15px/20px var(--ui); padding-top: 1px; }
.ami-label { display: block; color: var(--muted); padding: 3px 0 12px; }
.ami-select { display: flex; width: 100%; height: 120px; border: 1px solid #879596; border-radius: 2px; padding: 5px 13px 0 10px; text-align: left; color: #545b64; gap: 12px; }
.ami-select > svg { margin-top: 29px; }
.ami-text { flex: 1; }
.ami-name { display: flex; justify-content: space-between; color: var(--ink); padding-right: 1px; line-height: 27px; }
small { display: block; font-size: 15px; line-height: 20px; color: var(--muted); }
.facts { display: flex; gap: 18px; }

/* summary */
.summary { flex: none; width: 470px; margin-top: 13px; }
.sum-head { height: 80px; padding: 22px 25px; gap: 12px; }
.sum-body { padding: 20px 25px 6px; border-bottom: 1px solid #879196; }
.count-label { display: flex; align-items: baseline; gap: 9px; margin-bottom: 7px; }
.sum-body .field { width: 100%; display: block; }
hr { margin: 15px 0 20px; border: 0; border-top: 1px solid #eaeded; }
.sum-scroll { display: flex; height: 433px; overflow: hidden; }
.sum-list { flex: 1; min-width: 0; overflow: hidden; }
.sum-list dt { margin-bottom: 7px; }
.sum-list dd { margin-bottom: 23px; }
.sum-list small { line-height: 20px; padding: 2px 0 0; }
.sum-list dd:first-of-type { margin-bottom: 21px; }
.tier { display: flex; gap: 10px; height: 160px; border: 1px solid var(--link); border-radius: 2px; background: #f1faff; padding: 25px 27px 25px 25px; color: var(--link); }
.tier p { flex: 1; color: var(--ink); font-size: 14px; line-height: 25px; padding-top: 2px; }
.tier button { align-self: flex-start; }
.sum-scroll .thumb { margin: 7px 0 auto; height: 295px; }
.page-bar .thumb { margin: 62px 0 auto; height: 184px; }
.sum-foot { padding: 24px 25px 27px; display: flex; flex-direction: column; gap: 10px; }
.sum-foot div { display: flex; justify-content: space-between; font-weight: 600; }
.sum-foot > a { align-self: flex-end; margin-right: 20px; padding-bottom: 1px; }
.cancel { padding: 0 25px; color: #545b64; }
.launch { height: 40px; padding: 0 27px; background: #f90; border-radius: 2px; }

/* console footer */
.aws-foot { flex: none; height: 37px; background: #232f3e; border-top: 1px solid #414d5c; display: flex; align-items: center; padding: 0 20px; gap: 31px; font: 500 15px/20px var(--ui); color: #fff; }
.aws-foot a { color: #fff; }
.shell { display: flex; align-items: center; gap: 6px; }
.copy { margin: 0 6px 0 auto; }

/* Windows taskbar */
.taskbar { flex: none; height: 50px; display: flex; background: linear-gradient(90deg, #0b2f2f, #173a38 35%, #0d3332 75%, #123b36); color: #fff; font: 16px/22px var(--ui); }
.start { width: 60px; display: flex; align-items: center; justify-content: center; }
.win-search { width: 360px; display: flex; align-items: center; gap: 14px; padding-left: 14px; background: #345a5b; border: 1px solid #567577; }
.win-search input { flex: 1; font-size: 18px; }
.win-search input::placeholder { color: #dfe7e7; opacity: 1; }
.scene { align-self: flex-end; margin-right: -1px; }
.apps { display: flex; }
.apps button { width: 62px; display: flex; align-items: center; justify-content: center; position: relative; }
.apps .run::after { content: ""; position: absolute; left: 6px; right: 5px; bottom: 0; height: 3px; background: #8fe3e6; }
.apps .active { background: #0a7578; }
.apps .active::after { left: 0; right: 0; }
.tray { margin-left: auto; display: flex; align-items: center; padding-right: 5px; }
.weather { display: flex; align-items: center; gap: 10px; margin-right: 31px; }
.tray-icons { display: flex; align-items: center; gap: 12px; margin-right: 13px; }
.lang { font-size: 14px; }
.clock { display: flex; flex-direction: column; align-items: center; margin: 0 24px 0 16px; font-size: 14px; line-height: 23px; }
.notify { position: relative; padding-right: 14px; border-right: 1px solid #6c8785; height: 48px; }
.notify b { position: absolute; left: 17px; top: 19px; font-size: 14px; font-weight: 400; }
```
